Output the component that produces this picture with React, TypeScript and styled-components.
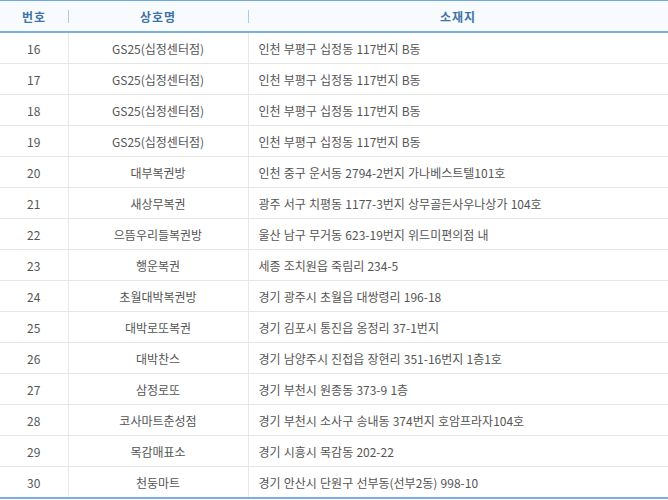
import React from "react";
import styled, { createGlobalStyle } from "styled-components";

const Global = createGlobalStyle`
  html, body { margin: 0; padding: 0; background: #ffffff; }
  body { font-family: "Noto Sans CJK KR", "Noto Sans", sans-serif; }
`;

const Table = styled.table`
  width: 668px;
  border-collapse: collapse;
  table-layout: fixed;
  border-top: 1px solid #6fa8dc;
  border-bottom: 2px solid #7aafe0;
`;

const HeadRow = styled.tr`
  background: #f7fbfd;
  border-bottom: 2px solid #7aafe0;
`;

const HeadCell = styled.th<{ $divider?: boolean }>`
  height: 30px;
  padding: 0;
  font-size: 12px;
  font-weight: 700;
  color: #3f73a8;
  text-align: center;
  letter-spacing: 1px;
  background: ${(p) =>
    p.$divider
      ? "linear-gradient(#a6cbee, #a6cbee) left center / 1px 13px no-repeat"
      : "none"};
`;

const Row = styled.tr`
  border-bottom: 1px solid #e6e6e6;
  &:last-child { border-bottom: none; }
`;

const Cell = styled.td<{ $align?: "left" | "center"; $first?: boolean }>`
  height: 30px;
  padding: 0 ${(p) => (p.$align === "left" ? "10px" : "0")};
  font-size: 12px;
  color: #555555;
  word-spacing: 0.5px;
  text-align: ${(p) => p.$align ?? "center"};
  border-left: ${(p) => (p.$first ? "none" : "1px solid #e8e8e8")};
  white-space: nowrap;
  overflow: hidden;
`;

const rows: [number, string, string][] = [
  [16, "GS25(십정센터점)", "인천 부평구 십정동 117번지 B동"],
  [17, "GS25(십정센터점)", "인천 부평구 십정동 117번지 B동"],
  [18, "GS25(십정센터점)", "인천 부평구 십정동 117번지 B동"],
  [19, "GS25(십정센터점)", "인천 부평구 십정동 117번지 B동"],
  [20, "대부복권방", "인천 중구 운서동 2794-2번지 가나베스트텔101호"],
  [21, "새상무복권", "광주 서구 치평동 1177-3번지 상무골든사우나상가 104호"],
  [22, "으뜸우리들복권방", "울산 남구 무거동 623-19번지 위드미편의점 내"],
  [23, "행운복권", "세종 조치원읍 죽림리 234-5"],
  [24, "초월대박복권방", "경기 광주시 초월읍 대쌍령리 196-18"],
  [25, "대박로또복권", "경기 김포시 통진읍 옹정리 37-1번지"],
  [26, "대박찬스", "경기 남양주시 진접읍 장현리 351-16번지 1층1호"],
  [27, "삼정로또", "경기 부천시 원종동 373-9 1층"],
  [28, "코사마트춘성점", "경기 부천시 소사구 송내동 374번지 호암프라자104호"],
  [29, "목감매표소", "경기 시흥시 목감동 202-22"],
  [30, "천둥마트", "경기 안산시 단원구 선부동(선부2동) 998-10"],
];

export default function App() {
  return (
    <>
      <Global />
      <Table>
        <colgroup>
          <col style={{ width: 68 }} />
          <col style={{ width: 180 }} />
          <col />
        </colgroup>
        <thead>
          <HeadRow>
            <HeadCell>번호</HeadCell>
            <HeadCell $divider>상호명</HeadCell>
            <HeadCell $divider>소재지</HeadCell>
          </HeadRow>
        </thead>
        <tbody>
          {rows.map(([n, name, addr]) => (
            <Row key={n}>
              <Cell $first>{n}</Cell>
              <Cell>{name}</Cell>
              <Cell $align="left">{addr}</Cell>
            </Row>
          ))}
        </tbody>
      </Table>
    </>
  );
}
